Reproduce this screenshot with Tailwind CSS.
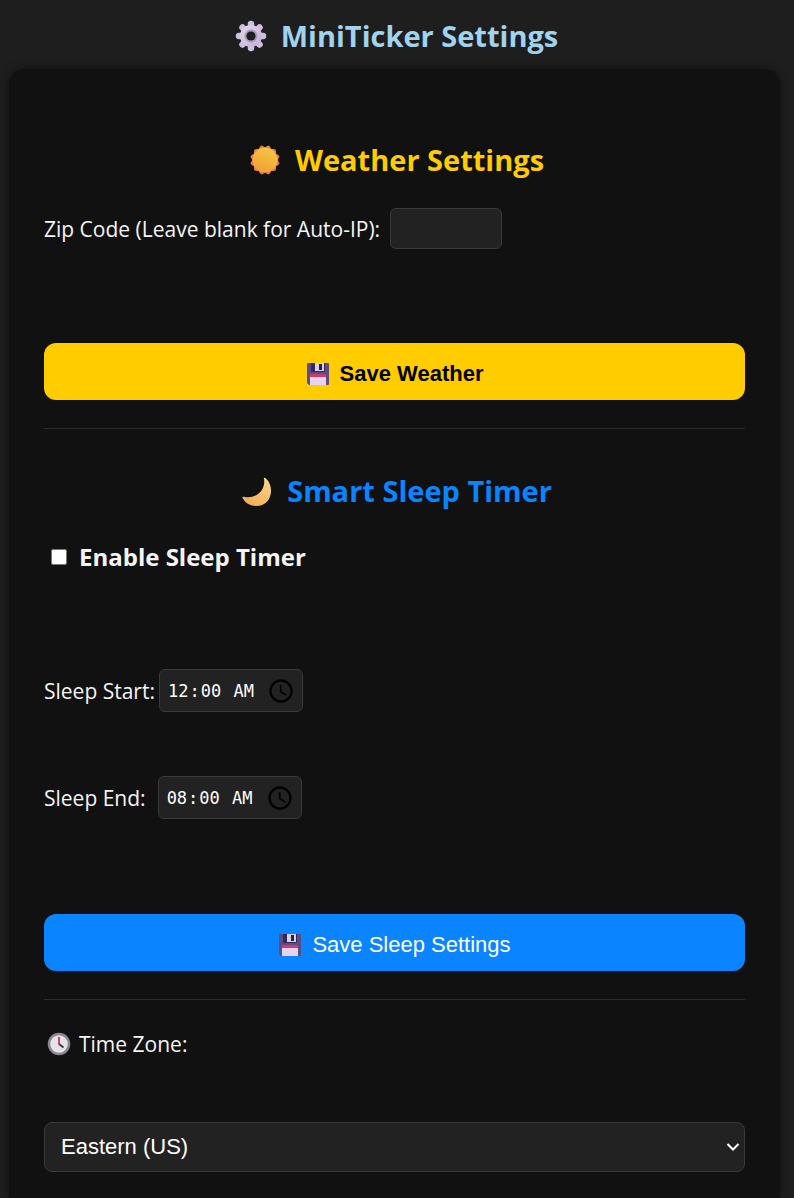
<!DOCTYPE html>
<html lang="en">

<head>
    <meta charset="UTF-8">
    <meta name="viewport" content="width=device-width, initial-scale=1.0">
    <title>MiniTicker Settings</title>
    <script src="https://cdn.jsdelivr.net/npm/@tailwindcss/browser@4"></script>
</head>

<body class="bg-[#1e1e1e] min-h-screen flex flex-col pl-[9px] pr-3.5 font-['Open_Sans','Noto_Sans',sans-serif] text-[21px] leading-7 text-[#f5f5f5]">
    <!-- shared icon -->
    <svg class="hidden">
        <symbol id="floppy" viewBox="0 0 24 24">
            <path d="M1 2q0-1 1-1h20q1 0 1 1v20q0 1-1 1H3l-2-2z" fill="#5b4b86" />
            <path d="M5 1h14v8q0 1-1 1H6q-1 0-1-1z" fill="#35275a" />
            <path d="M9 1h9v8H9z" fill="#d8d2e6" />
            <path d="M13 2h3v6h-3z" fill="#2b2044" />
            <path d="M4 12h16v11H4z" fill="#e6d3ec" />
            <path d="M4 12h16v3H4z" fill="#d23a68" />
        </symbol>
    </svg>

    <header class="pt-3.5 pb-[11px]">
        <h1 class="flex items-center justify-center gap-3.5 pl-1 text-[29px] leading-11 font-bold text-[#9fd3ee]">
            <svg class="size-8" viewBox="0 0 32 32">
                <defs>
                    <linearGradient id="gear" x1="0" y1="0" x2="1" y2="1">
                        <stop offset="0" stop-color="#e2d9ec" />
                        <stop offset="1" stop-color="#c0add6" />
                    </linearGradient>
                </defs>
                <g stroke="#cdbfdf" stroke-width="6.500" stroke-linecap="round">
                    <path d="M16 4v24M4 16h24M7.500 7.500l17 17M7.500 24.500l17-17" />
                </g>
                <circle cx="16" cy="16" r="11" fill="url(#gear)" />
                <circle cx="16" cy="16" r="6.500" fill="#ab98bd" />
                <circle cx="16" cy="16" r="4.600" fill="#1e1e1e" />
            </svg>
            MiniTicker Settings
        </h1>
    </header>

    <main class="grow rounded-t-2xl bg-[#111] px-[35px] pt-[69px] pb-6 shadow-[0_0_10px_rgba(0,0,0,0.5)]">
        <form>
            <h2 class="flex items-center justify-center gap-3.5 pl-1 text-[29px] leading-11 font-bold text-[#ffcc00]">
                <svg class="size-8" viewBox="0 0 32 32">
                    <defs>
                        <linearGradient id="sun" x1="0.700" y1="0" x2="0.300" y2="1">
                            <stop offset="0" stop-color="#f6c640" />
                            <stop offset="1" stop-color="#f0a038" />
                        </linearGradient>
                    </defs>
                    <g fill="#e77b45">
                        <rect x="5" y="5" width="22" height="22" rx="2" />
                        <rect x="5" y="5" width="22" height="22" rx="2" transform="rotate(30 16 16)" />
                        <rect x="5" y="5" width="22" height="22" rx="2" transform="rotate(60 16 16)" />
                    </g>
                    <circle cx="16" cy="16" r="12.500" fill="url(#sun)" />
                </svg>
                Weather Settings
            </h2>
            <div class="mt-[26px] flex items-center gap-2.5">
                <label for="zip">Zip Code (Leave blank for Auto-IP):</label>
                <input id="zip" type="text" class="h-[41px] w-28 rounded-md border border-[#3a3a3a] bg-[#222] px-2">
            </div>
            <button type="button"
                class="mt-[94px] flex h-[57px] w-full items-center justify-center gap-2.5 rounded-xl bg-[#ffcc00] pt-1 font-['Liberation_Sans',sans-serif] text-[22px] font-bold text-black">
                <svg class="size-6"><use href="#floppy" /></svg>
                Save Weather
            </button>
        </form>

        <hr class="mt-7 border-[#2c2c2c]">

        <form class="pt-10">
            <h2 class="flex items-center justify-center gap-3.5 pl-1 text-[29px] leading-11 font-bold text-[#0a84ff]">
                <svg class="size-8" viewBox="0 0 32 32">
                    <defs>
                        <linearGradient id="moon" x1="1" y1="0" x2="0.300" y2="1">
                            <stop offset="0" stop-color="#f8dc86" />
                            <stop offset="1" stop-color="#f4ab5c" />
                        </linearGradient>
                    </defs>
                    <path d="M23 4Q22 2.500 24 2.800C34 10 32 31 15 31Q6 31 1.500 23Q1 21.500 3 21.800C14 24.500 25 16 23 4z" fill="url(#moon)" />
                </svg>
                Smart Sleep Timer
            </h2>
            <div class="mt-[30px] flex items-center gap-3 pl-[7px]">
                <input id="enable" type="checkbox" class="size-4">
                <label for="enable" class="text-[24px] font-bold">Enable Sleep Timer</label>
            </div>
            <div class="mt-[98px] flex items-center gap-1">
                <label for="start">Sleep Start:</label>
                <input id="start" type="time" value="00:00"
                    class="h-[43px] w-36 rounded-md border border-[#3a3a3a] bg-[#222] px-[7px] font-['DejaVu_Sans_Mono',monospace] text-[17px] text-white [&::-webkit-calendar-picker-indicator]:size-7 [&::-webkit-calendar-picker-indicator]:p-0">
            </div>
            <div class="mt-16 flex items-center gap-3">
                <label for="end">Sleep End:</label>
                <input id="end" type="time" value="08:00"
                    class="h-[43px] w-36 rounded-md border border-[#3a3a3a] bg-[#222] px-[7px] font-['DejaVu_Sans_Mono',monospace] text-[17px] text-white [&::-webkit-calendar-picker-indicator]:size-7 [&::-webkit-calendar-picker-indicator]:p-0">
            </div>
            <button type="button"
                class="mt-[95px] flex h-[57px] w-full items-center justify-center gap-2.5 rounded-xl bg-[#0a84ff] pt-1 font-['Liberation_Sans',sans-serif] text-[22px] text-white">
                <svg class="size-6"><use href="#floppy" /></svg>
                Save Sleep Settings
            </button>
        </form>

        <hr class="mt-7 border-[#2c2c2c]">

        <div class="pt-[30px]">
            <label for="zone" class="flex items-center gap-2 pl-[3px]">
                <svg class="size-6" viewBox="0 0 24 24">
                    <circle cx="12" cy="12" r="10" fill="#e6e2ea" stroke="#8b868f" stroke-width="2.500" />
                    <path d="M12 5v7.500" stroke="#d2416f" stroke-width="2" />
                    <path d="M12 12l4.500 3.500" stroke="#3c3744" stroke-width="2" />
                </svg>
                Time Zone:
            </label>
            <div class="mt-16 grid items-center">
                <select id="zone"
                    class="col-start-1 row-start-1 h-[50px] w-full appearance-none rounded-lg border border-[#3a3a3a] bg-[#222] px-4 font-['Liberation_Sans',sans-serif] text-[22px] text-white">
                    <option>Eastern (US)</option>
                    <option>Central (US)</option>
                    <option>Mountain (US)</option>
                    <option>Pacific (US)</option>
                </select>
                <svg class="pointer-events-none col-start-1 row-start-1 mr-[5px] h-2 w-3.5 justify-self-end" viewBox="0 0 14 8" fill="none" stroke="white" stroke-width="2">
                    <path d="M1.500 1l5.500 5.500L12.500 1" />
                </svg>
            </div>
        </div>
    </main>
</body>

</html>
